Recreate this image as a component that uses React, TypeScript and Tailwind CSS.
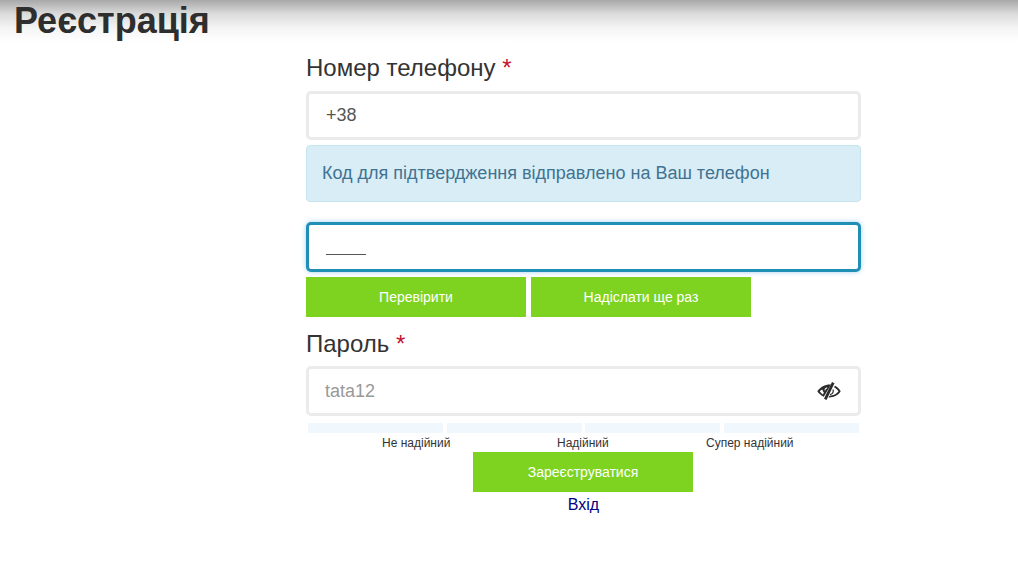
export default function App() {
  return (
    <div className="min-h-[561px] bg-white bg-[linear-gradient(to_bottom,#a8a8a8_0px,#dcdcdc_14px,#f4f4f4_28px,#ffffff_42px)] font-['Liberation_Sans',sans-serif] text-[#333333]">
      <h1 className="pl-[14px] pt-[2px] text-[36px] font-bold leading-[38px] text-[#2e2e2e]">Реєстрація</h1>
      <div className="ml-[306px] w-[555px] pt-[12px]">
        <label className="block h-[39px] text-[24px] leading-[32px]">
          Номер телефону <span className="text-[#c4122f]">*</span>
        </label>
        <div className="flex h-[49px] items-center rounded-[5px] border-[3px] border-[#ebebeb] bg-white pl-[17px] text-[18px] text-[#555555]">+38</div>
        <div className="mt-[5px] flex h-[57px] items-center rounded-[4px] border border-[#c5e6f0] bg-[#d9edf7] pl-[15px] text-[18px] text-[#3f7391]">
          Код для підтвердження відправлено на Ваш телефон
        </div>
        <div className="mt-[20px] flex h-[50px] items-center rounded-[5px] border-[3px] border-[#1f8fb5] bg-white pl-[17px] pt-[14px] text-[18px] text-[#555555] shadow-[0_0_5px_rgba(102,175,233,0.6)]">
          <span className="block h-[1px] w-[40px] bg-[#555555]"></span>
        </div>
        <div className="mt-[5px] flex gap-[5px]">
          <button className="h-[40px] w-[220px] bg-[#7ed321] text-[14px] text-white">Перевірити</button>
          <button className="h-[40px] w-[220px] bg-[#7ed321] text-[14px] text-white">Надіслати ще раз</button>
        </div>
        <label className="block h-[49px] pt-[11px] text-[24px] leading-[32px]">
          Пароль <span className="text-[#c4122f]">*</span>
        </label>
        <div className="flex h-[50px] items-center justify-between rounded-[5px] border-[3px] border-[#ebebeb] bg-white pl-[16px] pr-[17px] text-[18px] text-[#999999]">
          <span>tata12</span>
          <svg viewBox="0 0 24 18" className="h-[18px] w-[24px]" fill="#2b2b2b">
            <path d="M15 0l2.500 1.200L9.500 18 7 16.800z" />
            <path fillRule="evenodd" d="M14 2.600C8.500 2.200 3.500 5 .3 9.300c1.500 2.300 3.700 4.200 6.500 5.400L14 2.600zM2.700 9.300c.8 1.200 1.900 2.300 3.200 3.100l1-1.900C6 9.800 5.500 8.800 5.400 7.600 4.400 8.100 3.400 8.600 2.700 9.300zM9.700 5.400c-1.300.2-2.200 1.300-2.200 2.500 0 .3.200.5.500.5s.5-.2.500-.5c0-.8.600-1.400 1.400-1.500.300 0 .500-.300.400-.600 0-.200-.300-.400-.600-.400z" />
            <path d="M18 3.800c2.300 1.100 4.300 3 5.700 5.500-2.700 4.200-7.200 6.500-12.200 6.200l1-1.800c3.800.1 7-1.700 9-4.400-1.300-1.800-2.800-3.100-4.500-4z" />
            <path d="M16 7.500c.8 2.500-.5 4.500-3 5.300" fill="none" stroke="#2b2b2b" strokeWidth="1.200" />
          </svg>
        </div>
        <div className="mt-[7px] flex gap-[3.500px] px-[2px]">
          <div className="h-[10px] flex-1 bg-[#f0f7fd]"></div>
          <div className="h-[10px] flex-1 bg-[#f0f7fd]"></div>
          <div className="h-[10px] flex-1 bg-[#f0f7fd]"></div>
          <div className="h-[10px] flex-1 bg-[#f0f7fd]"></div>
        </div>
        <div className="relative h-[19px] text-[12px] leading-[19px]">
          <span className="absolute left-[76px] top-[1px]">Не надійний</span>
          <span className="absolute left-[251px] top-[1px]">Надійний</span>
          <span className="absolute left-[400px] top-[1px]">Супер надійний</span>
        </div>
        <button className="ml-[167px] block h-[40px] w-[220px] bg-[#7ed321] text-[14px] text-white">Зареєструватися</button>
        <div className="mt-[3px] text-center text-[16px] leading-[20px] text-[#000080]">Вхід</div>
      </div>
    </div>
  );
}
